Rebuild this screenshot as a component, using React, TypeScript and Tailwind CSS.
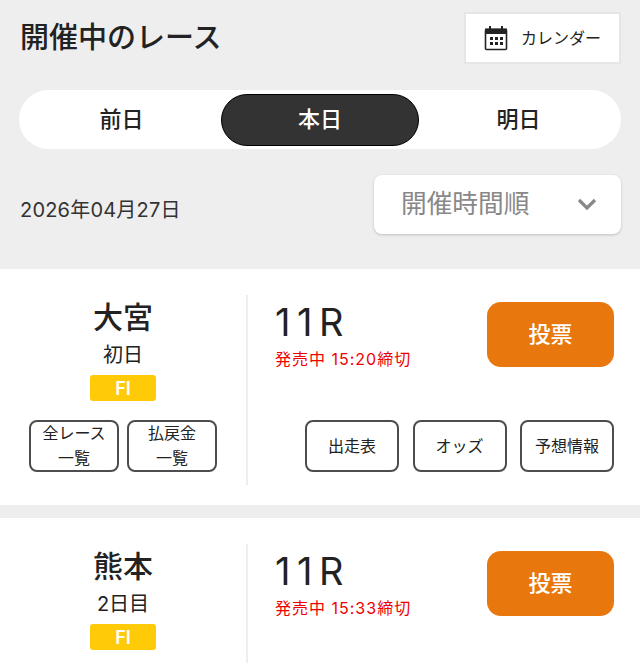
const CalendarIcon = () => (
  <svg width="24" height="26" viewBox="0 0 24 26" className="shrink-0">
    <rect x="1.5" y="4.5" width="21" height="20" rx="1" fill="#fff" stroke="#222" strokeWidth="1.6" />
    <path d="M1 3.5h22V9H1z" fill="#222" />
    <rect x="5" y="1" width="2" height="4" fill="#222" />
    <rect x="17" y="1" width="2" height="4" fill="#222" />
    {[6, 11, 16].map((x) =>
      [12, 17].map((y) => <rect key={`${x}-${y}`} x={x} y={y} width="3" height="3" fill="#222" />),
    )}
  </svg>
);

const SmallButton = ({ lines, className = "" }: { lines: string[]; className?: string }) => (
  <button className={`flex h-[52px] flex-col items-center justify-center rounded-lg border-2 border-[#4d4d4d] bg-white text-[16px] leading-[25px] text-[#222] ${className}`}>
    {lines.map((l) => (
      <span key={l}>{l}</span>
    ))}
  </button>
);

const RaceCard = ({ place, day, close }: { place: string; day: string; close: string }) => (
  <section className="flex h-[236px] bg-white pt-[26px]">
    <div className="flex h-[190px] w-[248px] shrink-0 flex-col items-center border-r-2 border-[#eeeeee]">
      <h2 className="text-[30px] leading-[44px] font-medium text-[#222]">{place}</h2>
      <p className="mt-[2px] text-[20px] leading-[28px] text-[#222]">{day}</p>
      <span className="mt-[6px] flex h-[26px] w-[66px] items-center justify-center rounded-[3px] bg-[#ffcb08] text-[18px] font-semibold text-white">
        FI
      </span>
      <div className="mt-[19px] flex gap-2">
        <SmallButton lines={["全レース", "一覧"]} className="w-[90px]" />
        <SmallButton lines={["払戻金", "一覧"]} className="w-[90px]" />
      </div>
    </div>
    <div className="flex h-[190px] flex-1 flex-col pr-[26px] pb-[13px]">
      <div className="flex justify-between pl-[27px]">
        <div className="pt-[2px]">
          <p className="text-[38px] leading-[50px] font-normal tracking-[6.5px] text-[#222]">11R</p>
          <p className="text-[16px] leading-[24px] tracking-[1px] whitespace-nowrap text-[#ee0000]">発売中 {close}締切</p>
        </div>
        <button className="mt-[7px] h-[65px] w-[127px] rounded-[14px] bg-[#e8770d] text-[22px] font-medium text-white">
          投票
        </button>
      </div>
      <div className="mt-auto flex justify-end gap-[13.5px]">
        <SmallButton lines={["出走表"]} className="w-[94px]" />
        <SmallButton lines={["オッズ"]} className="w-[94px]" />
        <SmallButton lines={["予想情報"]} className="w-[94px]" />
      </div>
    </div>
  </section>
);

export default function App() {
  return (
    <div className="h-[663px] w-[640px] overflow-hidden bg-[#eeeeee] font-['Inter','Noto_Sans_CJK_JP',sans-serif]">
      <header className="flex items-start justify-between pt-3 pr-[19px] pl-5">
        <h1 className="mt-[2px] text-[29px] leading-[48px] font-medium whitespace-nowrap text-[#222]">開催中のレース</h1>
        <button className="flex h-[52px] w-[157px] items-center justify-center gap-[13px] border-2 border-[#e6e6e6] bg-white text-[16px] text-[#222]">
          <CalendarIcon />
          カレンダー
        </button>
      </header>

      <nav className="mx-[19px] mt-[26px] flex h-[59px] items-center rounded-full bg-white text-[22px] font-medium text-[#222]">
        <button className="flex-1 pl-[3px]">前日</button>
        <button className="h-[52px] w-[198px] rounded-full border border-black bg-[#333333] text-white">本日</button>
        <button className="flex-1 pr-[3px]">明日</button>
      </nav>

      <div className="mt-[26px] flex items-center justify-between pr-[19px] pl-5">
        <p className="mt-[11px] text-[20px] tracking-[0.2px] whitespace-nowrap text-[#333]">2026年04月27日</p>
        <div className="flex h-[59px] w-[247px] items-center justify-between rounded-lg bg-white pr-[24px] pl-[27px] text-[25.7px] text-[#888] shadow-[0_1px_3px_rgba(0,0,0,0.2)]">
          開催時間順
          <svg width="20" height="13" viewBox="0 0 20 13" fill="none">
            <path d="M2 2l8 8 8-8" stroke="#888" strokeWidth="3.2" />
          </svg>
        </div>
      </div>

      <div className="mt-[35px] flex flex-col gap-[13px]">
        <RaceCard place="大宮" day="初日" close="15:20" />
        <RaceCard place="熊本" day="2日目" close="15:33" />
      </div>
    </div>
  );
}
